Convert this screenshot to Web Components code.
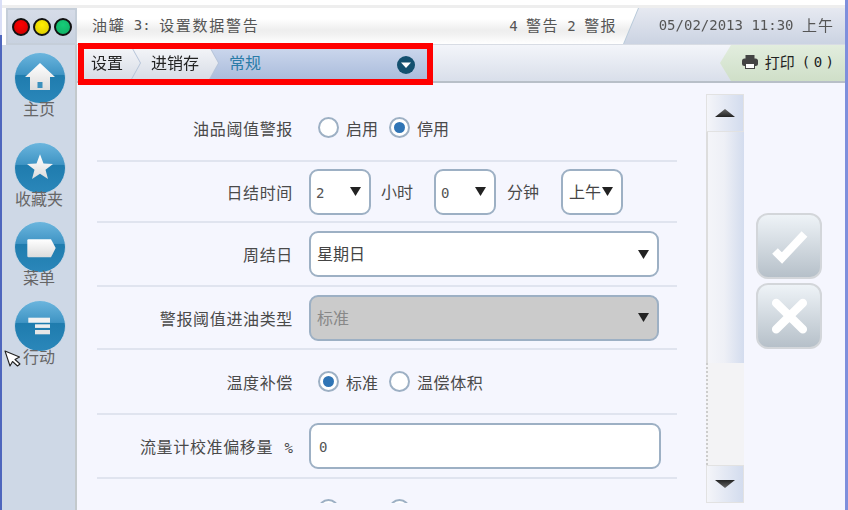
<!DOCTYPE html>
<html>
<head>
<meta charset="utf-8">
<style>
  html, body { margin: 0; padding: 0; }
  body { width: 848px; height: 510px; overflow: hidden; background: #fff; font-family: "Noto Sans CJK SC", "Liberation Sans", sans-serif; color: #333; }
</style>
</head>
<body>
<console-app></console-app>
<script>
const FONT = `"Noto Sans CJK SC", "Liberation Sans", sans-serif`;
const MONO = `"DejaVu Sans Mono", "Noto Sans CJK SC", monospace`;

class StatusLights extends HTMLElement {
  connectedCallback() {
    this.attachShadow({ mode: 'open' });
    this.shadowRoot.innerHTML = `
      <style>
        :host { display: flex; gap: 3px; align-items: center; justify-content: center; height: 37px; margin-left: 4px; box-sizing: border-box; flex: none;
          background: linear-gradient(#d6dce8, #c8d2e0); border: 2px solid #c5ced9; }
        span { width: 18px; height: 18px; border-radius: 50%; border: 2px solid #111; box-sizing: border-box; }
      </style>
      <span style="background:radial-gradient(circle at 50% 35%, #f00, #c80000)"></span>
      <span style="background:radial-gradient(circle at 50% 35%, #ffee00, #d8c800)"></span>
      <span style="background:radial-gradient(circle at 50% 35%, #16cc78, #0fae64)"></span>`;
  }
}

class TopBar extends HTMLElement {
  connectedCallback() {
    this.attachShadow({ mode: 'open' });
    this.shadowRoot.innerHTML = `
      <style>
        :host { display: flex; height: 37px; flex: none; font: 14px ${MONO}; color: #555; border-bottom: 1px solid #d8dce4; box-sizing: border-box;
          background: linear-gradient(#fff 0, #fff 30%, #eee 62%, #f1f1f1 72%, #fff 100%); }
        .title { flex: 1; display: flex; align-items: center; padding: 0 7px 3px 15px; white-space: pre; }
        .z { font: 15px ${FONT}; letter-spacing: 1.7px; }
        .alerts { margin-left: auto; }
        .alerts .z { letter-spacing: 1.4px; }
        .tab { width: 221px; flex: none; filter: drop-shadow(-1px 0 0 #b7c9d9); }
        .date { height: 100%; display: flex; align-items: center; justify-content: flex-end; padding: 0 12px 3px 0; box-sizing: border-box; white-space: pre;
          background: linear-gradient(#e6e9f1, #cbd3e2); clip-path: polygon(15px 0, 100% 0, 100% 100%, 0 100%); }
        .date .z { letter-spacing: 1px; margin-right: -1px; }
      </style>
      <div class="title"><span class="z">油罐</span> 3: <span class="z">设置数据警告</span><span class="alerts">4 <span class="z">警告</span> 2 <span class="z">警报</span></span></div>
      <div class="tab"><div class="date">05/02/2013 11:30 <span class="z">上午</span></div></div>`;
  }
}

class CrumbBar extends HTMLElement {
  connectedCallback() {
    this.attachShadow({ mode: 'open' });
    this.shadowRoot.innerHTML = `
      <style>
        :host { display: flex; height: 38px; flex: none; position: relative; background: linear-gradient(#f3f5fa, #d9dfea); border-bottom: 2px solid #b8bfc8; box-sizing: border-box; font: 16px ${FONT}; }
        .crumbs { width: 356px; flex: none; display: flex; align-items: center; position: relative; background: linear-gradient(#ced9ee, #a9bbdb); }
        .w { height: 100%; position: relative; filter: drop-shadow(1.5px 0 0 #b5c3d8); }
        .w:nth-child(1) { z-index: 2; }
        .w:nth-child(2) { z-index: 1; margin-left: -12px; }
        .c { height: 100%; box-sizing: border-box; padding-bottom: 3px; display: flex; align-items: center; color: #222; background: linear-gradient(#f6f7fa, #d6dbe5); clip-path: polygon(0 0, calc(100% - 10px) 0, 100% 50%, calc(100% - 10px) 100%, 0 100%); }
        .w:nth-child(1) .c { padding-left: 14px; padding-right: 17px; }
        .w:nth-child(2) .c { padding-left: 23px; padding-right: 19px; }
        .cur { color: #2a7ca8; margin: 0 0 3px 11px; }
        .dd { position: absolute; left: 320px; top: 11px; }
        .frame { position: absolute; left: 1px; top: -2px; width: 355px; height: 42px; border: 6px solid #f00; box-sizing: border-box; z-index: 3; }
        .print { margin-left: auto; width: 125px; display: flex; align-items: center; justify-content: flex-end; padding: 0 11px 3px 0; box-sizing: border-box; color: #222;
          font: 15px ${FONT}; background: linear-gradient(#e2edde, #cfdfc8); clip-path: polygon(11px 0, 100% 0, 100% 100%, 11px 100%, 0 50%); }
        .print svg { margin-right: 7px; }
        .n { font: 14px ${MONO}; letter-spacing: 3.5px; margin-left: 7px; margin-right: -3.5px; }
      </style>
      <div class="crumbs">
        <span class="w"><span class="c">设置</span></span><span class="w"><span class="c">进销存</span></span><span class="cur">常规</span>
        <svg class="dd" width="18" height="18" viewBox="0 0 18 18"><circle cx="9" cy="9" r="9" fill="#14506f"/><path d="M4 6.5h10L9 12z" fill="#fff"/></svg>
      </div>
      <div class="frame"></div>
      <div class="print">
        <svg width="16" height="14" viewBox="0 0 16 14"><rect x="3.5" y="0" width="9" height="4" fill="#444"/><rect x="0" y="3.5" width="16" height="7.5" rx="2.5" fill="#444"/><rect x="3.5" y="8.5" width="9" height="5" fill="#fff" stroke="#444"/></svg>
        打印<span class="n">(0)</span>
      </div>`;
  }
}

class NavButton extends HTMLElement {
  connectedCallback() {
    const icons = {
      home: '<path d="M26 11L41 25H36V38H16V25H11Z" fill="url(#w)"/><rect x="23.5" y="30" width="5" height="6" fill="#3a90bd"/>',
      star: '<path d="M26 12.3L29.5 21.5 39 22 31.5 27.8 34 37 26 31.7 18 37 20.5 27.8 13 22 22.5 21.5Z" fill="url(#w)"/>',
      menu: '<path d="M14.5 18.3H37L41.7 27 37 36.3H14.5a1.2 1.2 0 0 1-1.2-1.2V19.5a1.2 1.2 0 0 1 1.2-1.2Z" fill="url(#w)"/>',
      act: '<rect x="14.3" y="17.7" width="21.7" height="5" fill="#f2f2f2"/><rect x="21" y="24.3" width="15" height="3.6" fill="#eee"/><rect x="21" y="30" width="15" height="4.3" fill="#e6e6e6"/>'
    };
    this.attachShadow({ mode: 'open' });
    this.shadowRoot.innerHTML = `
      <style>
        :host { display: block; position: relative; width: 52px; height: 79px; flex: none; font: 16px ${FONT}; color: #666; text-align: center; }
        svg { display: block; }
        span { position: absolute; left: -10px; right: -8px; top: 46px; line-height: 20px; white-space: nowrap; }
      </style>
      <svg width="52" height="52" viewBox="0 0 52 52">
        <defs>
          <linearGradient id="g" x1="0" y1="0" x2="0" y2="1"><stop offset="0" stop-color="#6cb6de"/><stop offset=".43" stop-color="#3f94c4"/><stop offset=".45" stop-color="#1f7cae"/><stop offset="1" stop-color="#2b87ba"/></linearGradient>
          <linearGradient id="w" x1="0" y1="0" x2="0" y2="1"><stop offset="0" stop-color="#fff"/><stop offset="1" stop-color="#dcdcdc"/></linearGradient>
        </defs>
        <circle cx="26" cy="26" r="25.5" fill="url(#g)" stroke="#d5dde8" stroke-width=".8"/>${icons[this.getAttribute('icon')]}
      </svg><span><slot></slot></span>`;
  }
}

class SideBar extends HTMLElement {
  connectedCallback() {
    this.attachShadow({ mode: 'open' });
    this.shadowRoot.innerHTML = `
      <style>
        :host { display: flex; flex-direction: column; align-items: center; flex: 1; padding: 7px 0 0 3px; box-sizing: border-box; position: relative; margin-left: 0;
          background: #ced8e6; border-right: 2px solid #c3c9cc; }
        .cursor { position: absolute; left: 2px; top: 305px; }
      </style>
      <slot></slot>
      <svg class="cursor" width="17" height="17" viewBox="0 0 17 17"><path d="M1 1L15.5 7 11 9.5 16 14 13.5 16 8.5 11.5 6 16Z" fill="#fff" stroke="#222" stroke-width="1.1" stroke-linejoin="round"/></svg>`;
  }
}

class FormRow extends HTMLElement {
  connectedCallback() {
    this.attachShadow({ mode: 'open' });
    this.shadowRoot.innerHTML = `
      <style>
        :host { display: grid; grid-template-columns: 196px 1fr; column-gap: 16px; align-items: center; height: var(--h, 63px); border-bottom: 2px solid #e0e4ef; box-sizing: border-box; font: 16px ${FONT}; color: #4a4a4a; }
        .l { text-align: right; letter-spacing: .65px; white-space: nowrap; }
        .v { display: flex; align-items: center; }
      </style>
      <div class="l"><slot name="label"></slot></div>
      <div class="v"><slot></slot></div>`;
  }
}

class RadioOpt extends HTMLElement {
  connectedCallback() {
    this.attachShadow({ mode: 'open' });
    const on = this.hasAttribute('checked');
    this.shadowRoot.innerHTML = `
      <style>
        :host { display: inline-flex; align-items: center; gap: 7px; margin-right: 11px; font: 16px ${FONT}; color: #4a4a4a; }
        :host([first]) { margin-left: 9px; }
        .r { width: 21px; height: 21px; box-sizing: border-box; border-radius: 50%; border: 2px solid #9db0c4; background: #fff; display: flex; align-items: center; justify-content: center; }
        .d { width: 11px; height: 11px; border-radius: 50%; background: #2f74b5; }
      </style>
      <span class="r">${on ? '<span class="d"></span>' : ''}</span><slot></slot>`;
  }
}

class SelectBox extends HTMLElement {
  connectedCallback() {
    this.attachShadow({ mode: 'open' });
    const dis = this.hasAttribute('disabled');
    this.shadowRoot.innerHTML = `
      <style>
        :host { display: flex; align-items: center; flex: none; height: 46px; box-sizing: border-box; border: 2px solid #9db0c4; border-radius: 9px; background: ${dis ? '#cbcbcb' : '#fff'}; padding: 0 8px 0 6px; font: 16px ${FONT}; color: ${dis ? '#888' : '#444'}; }
        .t { flex: 1; white-space: nowrap; margin-bottom: 2px; }
        svg { flex: none; }
      </style>
      <span class="t"><slot></slot></span>
      <svg width="11" height="9" viewBox="0 0 11 9"><path d="M0 0h11L5.5 9z" fill="#222"/></svg>`;
  }
}

class TextField extends HTMLElement {
  connectedCallback() {
    this.attachShadow({ mode: 'open' });
    this.shadowRoot.innerHTML = `
      <style>
        :host { display: flex; align-items: center; flex: none; height: 46px; box-sizing: border-box; border: 2px solid #9db0c4; border-radius: 9px; background: #fff; padding: 2px 0 0 8px; font: 14px ${MONO}; color: #555; }
      </style>
      <slot></slot>`;
  }
}

class ScrollTrack extends HTMLElement {
  connectedCallback() {
    this.attachShadow({ mode: 'open' });
    this.shadowRoot.innerHTML = `
      <style>
        :host { display: flex; flex-direction: column; width: 38px; height: 409px; flex: none; box-sizing: border-box; }
        .b { height: 38px; flex: none; display: flex; align-items: center; justify-content: center; background: linear-gradient(90deg, #f4f5f9, #d3dcee); border: 1px solid #e2e2e2; box-sizing: border-box; }
        .thumb { height: 231px; background: linear-gradient(90deg, #f4f5f9, #eef0f6 45%, #d3dcee); border-left: 2px solid #ddd; }
        .rest { flex: 1; background: #f3f3f5; border-left: 2px dotted #ccc; }
      </style>
      <div class="b"><svg width="20" height="8" viewBox="0 0 20 8"><defs><linearGradient id="a" x1="0" y1="0" x2="0" y2="1"><stop offset="0" stop-color="#666"/><stop offset="1" stop-color="#222"/></linearGradient></defs><path d="M10 0L20 8H0z" fill="url(#a)"/></svg></div>
      <div class="thumb"></div>
      <div class="rest"></div>
      <div class="b"><svg width="20" height="8" viewBox="0 0 20 8"><defs><linearGradient id="b" x1="0" y1="0" x2="0" y2="1"><stop offset="0" stop-color="#222"/><stop offset="1" stop-color="#666"/></linearGradient></defs><path d="M0 0h20L10 8z" fill="url(#b)"/></svg></div>`;
  }
}

class ActionButton extends HTMLElement {
  connectedCallback() {
    this.attachShadow({ mode: 'open' });
    const g = this.getAttribute('kind') === 'ok'
      ? '<path d="M17 36L24 43 46.5 19" fill="none" stroke="#fff" stroke-width="8"/>'
      : '<path d="M18.2 18L44.8 44.2M44.8 18L18.2 44.2" fill="none" stroke="#fff" stroke-width="8.5" stroke-linecap="round"/>';
    this.shadowRoot.innerHTML = `
      <style>
        :host { display: block; width: 66px; height: 66px; box-sizing: border-box; border: 2px solid #d3d6da; border-radius: 12px; background: linear-gradient(#eef3f7, #b6c0c9); }
        svg { display: block; }
      </style>
      <svg width="62" height="62" viewBox="0 0 62 62">${g}</svg>`;
  }
}

class ConsoleApp extends HTMLElement {
  connectedCallback() {
    this.attachShadow({ mode: 'open' });
    this.shadowRoot.innerHTML = `
      <style>
        :host { display: flex; width: 848px; height: 510px; box-sizing: border-box; padding-top: 8px; border-right: 3px solid #7e8fdc;
          background: linear-gradient(#d9def6 35px, #4e66bd 35px) 0 0 / 2px 100% no-repeat, linear-gradient(#fff 5px, #eee 5px, #eee 8px, #fff 8px); font: 16px ${FONT}; }
        .left { width: 75px; margin-left: 2px; flex: none; display: flex; flex-direction: column; }
        .right { flex: 1; display: flex; flex-direction: column; min-width: 0; }
        .main { flex: 1; min-height: 0; background: #f5f6fe; display: flex; padding: 12px 0 0 20px; }
        .form { width: 580px; height: 408px; flex: none; overflow: hidden; }
        .scroll { margin: -1px 0 0 29px; }
        .actions { display: flex; flex-direction: column; gap: 4px; margin: 118px 0 0 12px; }
        .pct { font: 14px ${MONO}; letter-spacing: 0; margin-left: 3px; }
        .unit { flex: none; margin-bottom: 2px; }
        .num { font: 14px ${MONO}; color: #555; margin-left: -1px; }
      </style>
      <div class="left">
        <status-lights></status-lights>
        <side-bar>
          <nav-button icon="home" style="height:90px">主页</nav-button>
          <nav-button icon="star">收藏夹</nav-button>
          <nav-button icon="menu">菜单</nav-button>
          <nav-button icon="act">行动</nav-button>
        </side-bar>
      </div>
      <div class="right">
        <top-bar></top-bar>
        <crumb-bar></crumb-bar>
        <div class="main">
          <div class="form">
            <form-row style="--h:67px"><span slot="label">油品阈值警报</span><radio-opt first>启用</radio-opt><radio-opt checked>停用</radio-opt></form-row>
            <form-row style="--h:61px"><span slot="label">日结时间</span><select-box style="width:62px"><span class="num">2</span></select-box><span class="unit" style="margin-left:10px;margin-right:21px">小时</span><select-box style="width:62px"><span class="num">0</span></select-box><span class="unit" style="margin-left:11px;margin-right:22px">分钟</span><select-box style="width:62px">上午</select-box></form-row>
            <form-row style="--h:64px"><span slot="label">周结日</span><select-box style="width:350px">星期日</select-box></form-row>
            <form-row style="--h:63px"><span slot="label">警报阈值进油类型</span><select-box disabled style="width:350px">标准</select-box></form-row>
            <form-row style="--h:65px"><span slot="label">温度补偿</span><radio-opt first checked>标准</radio-opt><radio-opt style="letter-spacing:.6px">温偿体积</radio-opt></form-row>
            <form-row style="--h:64px"><span slot="label">流量计校准偏移量<span class="pct"> %</span></span><text-field style="width:352px">0</text-field></form-row>
            <form-row style="--h:63px"><span slot="label">票据进油调整启用</span><radio-opt first>启用</radio-opt><radio-opt>停用</radio-opt></form-row>
          </div>
          <scroll-track class="scroll"></scroll-track>
          <div class="actions"><action-button kind="ok"></action-button><action-button kind="no"></action-button></div>
        </div>
      </div>`;
  }
}

customElements.define('status-lights', StatusLights);
customElements.define('top-bar', TopBar);
customElements.define('crumb-bar', CrumbBar);
customElements.define('nav-button', NavButton);
customElements.define('side-bar', SideBar);
customElements.define('form-row', FormRow);
customElements.define('radio-opt', RadioOpt);
customElements.define('select-box', SelectBox);
customElements.define('text-field', TextField);
customElements.define('scroll-track', ScrollTrack);
customElements.define('action-button', ActionButton);
customElements.define('console-app', ConsoleApp);
</script>
</body>
</html>
